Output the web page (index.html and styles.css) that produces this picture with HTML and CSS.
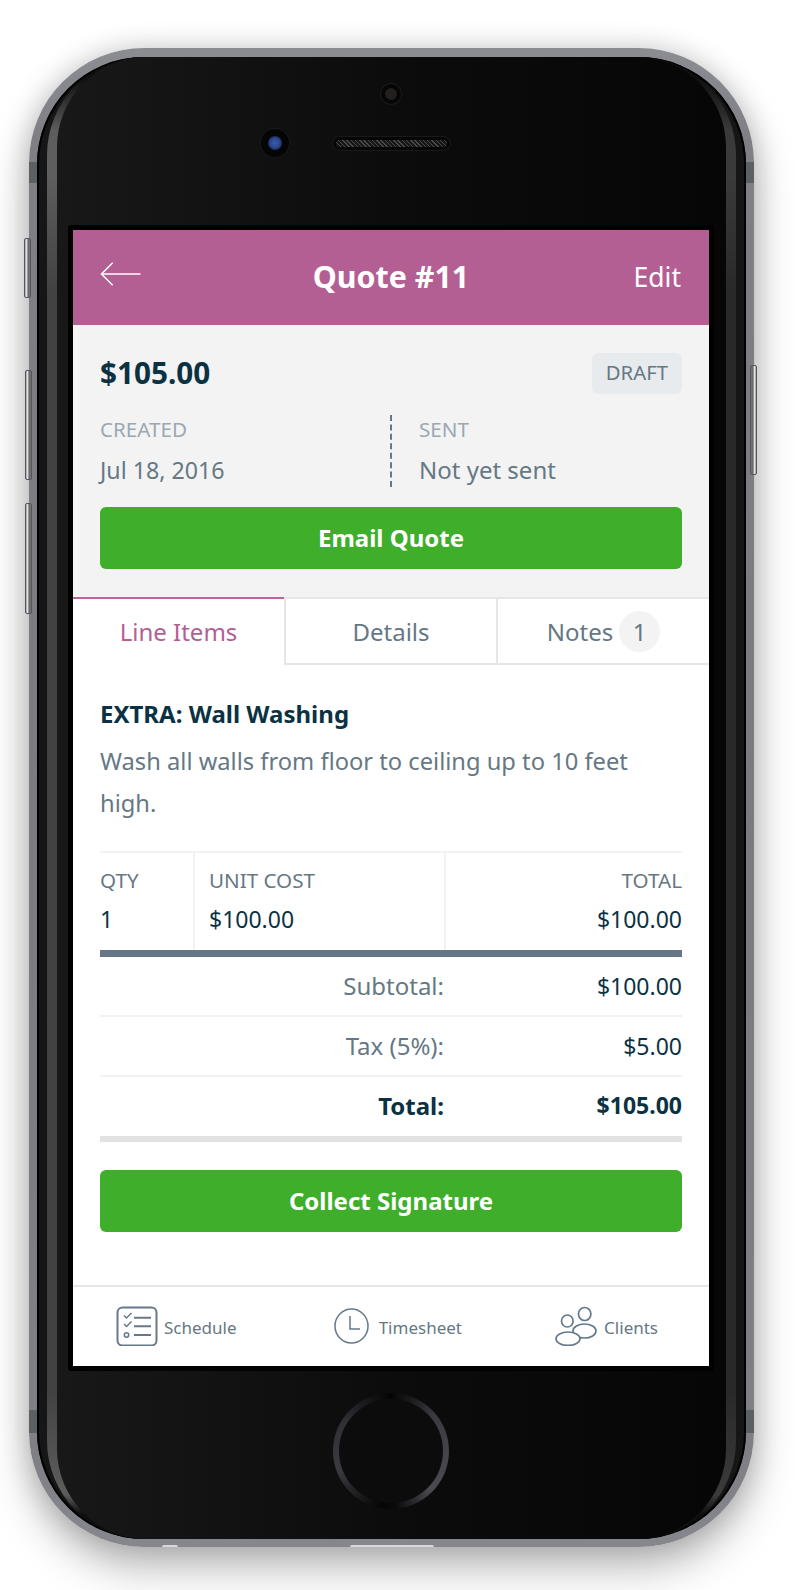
FILE: index.html
```html
<!DOCTYPE html>
<html lang="en">
<head>
<meta charset="utf-8">
<title>Quote #11</title>
<link rel="stylesheet" href="styles.css">
</head>
<body>
<div class="phone">
  <span class="hw-btn hw-mute"></span>
  <span class="hw-btn hw-up"></span>
  <span class="hw-btn hw-down"></span>
  <span class="hw-btn hw-power"></span>
  <span class="band band-tl"></span><span class="band band-tr"></span>
  <span class="band band-bl"></span><span class="band band-br"></span>
  <span class="notch notch-a"></span><span class="notch notch-b"></span>
  <div class="bezel">
    <div class="glare">
      <div class="face">
        <div class="front-sensor"></div>
        <div class="sensor-row">
          <div class="camera"><div class="lens"></div></div>
          <div class="speaker"><div class="mesh"></div></div>
        </div>
        <div class="frame">
          <div class="screen">
            <header class="topbar">
              <svg class="back" viewBox="0 0 42 26" width="41" height="26"><path d="M13 1.500 1.500 13 13 24.500M1.500 13H41.500" fill="none" stroke="#fff" stroke-width="1.500"/></svg>
              <h1 class="title">Quote #11</h1>
              <span class="edit">Edit</span>
            </header>
            <section class="summary">
              <div class="amount-row">
                <span class="amount">$105.00</span>
                <span class="badge">DRAFT</span>
              </div>
              <div class="meta">
                <div class="meta-col">
                  <div class="meta-label">CREATED</div>
                  <div class="meta-value meta-date">Jul 18, 2016</div>
                </div>
                <div class="meta-col meta-sent">
                  <div class="meta-label">SENT</div>
                  <div class="meta-value">Not yet sent</div>
                </div>
              </div>
              <div class="btn btn-email">Email Quote</div>
            </section>
            <nav class="tabs">
              <div class="tab tab-active">Line Items</div>
              <div class="tab">Details</div>
              <div class="tab">Notes<span class="count">1</span></div>
            </nav>
            <main class="content">
              <h2 class="item-title">EXTRA: Wall Washing</h2>
              <p class="item-desc">Wash all walls from floor to ceiling up to 10 feet high.</p>
              <div class="items">
                <div class="cell cell-qty"><div class="cell-label">QTY</div><div class="cell-value">1</div></div>
                <div class="cell cell-unit"><div class="cell-label">UNIT COST</div><div class="cell-value">$100.00</div></div>
                <div class="cell cell-total"><div class="cell-label">TOTAL</div><div class="cell-value">$100.00</div></div>
              </div>
              <div class="totals">
                <div class="total-row"><span class="total-label">Subtotal:</span><span class="total-value">$100.00</span></div>
                <div class="total-row"><span class="total-label">Tax (5%):</span><span class="total-value">$5.00</span></div>
                <div class="total-row total-grand"><span class="total-label">Total:</span><span class="total-value">$105.00</span></div>
              </div>
              <div class="btn btn-sign">Collect Signature</div>
            </main>
            <footer class="tabbar">
              <div class="bar-item bar-schedule">
                <svg width="42" height="40" viewBox="0 0 42 40" fill="none" stroke="#66798a" stroke-width="2"><rect x="1.500" y="1.500" width="39" height="38" rx="5"/><path d="M8 9.500l2.500 2.500 5-5M8 18l2.500 2.500 5-5" stroke-width="1.500"/><circle cx="10.500" cy="29" r="2.200" stroke-width="1.500"/><path d="M18 11.700h17M18 20.200h17M18 29h17"/></svg>
                <span class="bar-label">Schedule</span>
              </div>
              <div class="bar-item bar-timesheet">
                <svg width="35" height="36" viewBox="0 0 35 36" fill="none" stroke="#66798a" stroke-width="1.500"><ellipse cx="17.500" cy="18" rx="16.500" ry="17"/><path d="M16 8v13h10"/></svg>
                <span class="bar-label">Timesheet</span>
              </div>
              <div class="bar-item bar-clients">
                <svg width="44" height="40" viewBox="0 0 44 40" fill="#fff" stroke="#66798a" stroke-width="1.700"><ellipse cx="30.700" cy="8" rx="6.200" ry="6.500"/><ellipse cx="30.500" cy="25" rx="11.500" ry="7"/><ellipse cx="13.300" cy="15" rx="5.800" ry="6"/><ellipse cx="14" cy="32.700" rx="12" ry="6.700"/></svg>
                <span class="bar-label">Clients</span>
              </div>
            </footer>
          </div>
        </div>
        <div class="home"><div class="home-inner"></div></div>
      </div>
    </div>
  </div>
</div>
</body>
</html>
```

FILE: styles.css
```css
* { box-sizing: border-box; }
html, body { margin: 0; padding: 0; background: #fff; }
body {
  width: 795px;
  height: 1590px;
  overflow: hidden;
  padding: 48px 0 0 29px;
  font-family: "Noto Sans", sans-serif;
}

/* device */
.phone {
  position: relative;
  width: 725px;
  height: 1499px;
  padding: 9px 8px 8px;
  border-radius: 115px;
  background: linear-gradient(180deg, #8c8d92 0, #7f8085 6%, #7a7b80 50%, #7f8085 94%, #86878d 100%);
  box-shadow: 0 22px 42px rgba(0, 0, 0, .26), 0 0 28px rgba(0, 0, 0, .18);
}
.hw-btn {
  position: absolute;
  width: 7px;
  border-radius: 2px;
  border: 1px solid #55565a;
}
.hw-mute, .hw-up, .hw-down { background: linear-gradient(90deg, #8a8a8e 0, #f4f4f4 25%, #aaa 45%, #666669 65%, #77787c 100%); }
.hw-power { background: linear-gradient(270deg, #8a8a8e 0, #f4f4f4 25%, #aaa 45%, #666669 65%, #77787c 100%); }
.hw-mute { left: -5px; top: 190px; height: 60px; }
.hw-up { left: -4px; top: 322px; height: 110px; }
.hw-down { left: -4px; top: 455px; height: 111px; }
.hw-power { right: -3px; top: 317px; height: 110px; }
.band { position: absolute; width: 8px; height: 21px; background: #5c6062; }
.band-tl, .band-bl { left: 0; }
.band-tr, .band-br { right: 0; }
.band-tl, .band-tr { top: 114px; }
.band-bl, .band-br { top: 1362px; height: 23px; }
.notch { position: absolute; bottom: 0; height: 2px; background: #d9d9db; border-radius: 2px 2px 0 0; }
.notch-a { left: 133px; width: 16px; }
.notch-b { left: 321px; width: 84px; }

.bezel {
  height: 100%;
  padding: 0 10px;
  border-radius: 107px;
  background: #161616;
  box-shadow: inset 0 0 0 2px #000;
}
.glare {
  height: 100%;
  padding: 0 10px;
  border-radius: 98px;
  background:
    linear-gradient(180deg, #0f0f0f 0, #0f0f0f 1.500%, rgba(0, 0, 0, 0) 5%, rgba(0, 0, 0, 0) 8%, rgba(0, 0, 0, .3) 16%, rgba(0, 0, 0, .3) 90%, rgba(0, 0, 0, 0) 97%, #0f0f0f 98.300%),
    linear-gradient(90deg, #5e5e5e 0, #3a3a3a 100%);
}
.face {
  height: 100%;
  padding: 27px 0 0 11px;
  border-radius: 90px;
  background: linear-gradient(90deg, #181818 0, #0c0c0c 50%, #060606 100%);
  display: flex;
  flex-direction: column;
  overflow: hidden;
}
.front-sensor {
  align-self: flex-start;
  margin-left: 313px;
  width: 20px;
  height: 20px;
  padding: 3px;
  border-radius: 50%;
  background: #060606;
  box-shadow: 0 0 0 1px #1a1a1a;
}
.front-sensor::before {
  content: "";
  display: block;
  width: 14px;
  height: 14px;
  border-radius: 50%;
  background: #231f1f;
  box-shadow: inset 0 0 0 1px #000;
}
.sensor-row {
  display: flex;
  align-items: center;
  gap: 44px;
  height: 28px;
  margin: 25px 0 68px 193px;
}
.camera {
  width: 28px;
  height: 28px;
  padding: 7px;
  border-radius: 50%;
  background: #050505;
  box-shadow: 0 0 0 1px #191919;
}
.lens {
  width: 14px;
  height: 14px;
  border-radius: 50%;
  background: radial-gradient(circle at 50% 50%, #3a5aa8 0, #2b4a90 45%, #14234a 80%, #060810 100%);
}
.speaker {
  width: 117px;
  height: 13px;
  padding: 3px;
  border-radius: 7px;
  background: #060606;
  box-shadow: 0 0 0 1px #191919;
}
.mesh {
  height: 100%;
  border-radius: 4px;
  background: repeating-linear-gradient(45deg, #4a4a4a 0, #4a4a4a 1px, #171717 1px, #171717 3px);
}
.frame {
  flex: none;
  width: 646px;
  height: 1146px;
  padding: 5px;
  background: #000;
  border-radius: 3px;
}
.screen {
  width: 636px;
  height: 1136px;
  display: flex;
  flex-direction: column;
  background: #fff;
}
.home {
  align-self: flex-start;
  flex: none;
  margin: 22px 0 0 265px;
  width: 116px;
  height: 116px;
  padding: 6px;
  border-radius: 50%;
  background: conic-gradient(#050505 0deg, #3a3a40 50deg, #45454c 100deg, #4a4a50 135deg, #0a0a0c 175deg, #050505 190deg, #3a3a40 250deg, #303036 300deg, #050505 360deg);
}
.home-inner {
  height: 100%;
  border-radius: 50%;
  background: #0c0c0c;
}

/* header */
.topbar {
  flex: none;
  height: 95px;
  padding: 0 27px;
  background: #b35f93;
  color: #fff;
  display: grid;
  grid-template-columns: 1fr auto 1fr;
  align-items: center;
}
.back { margin-top: -7px; display: block; }
.title { margin: -1px 0 0; font-size: 30.400px; font-weight: 700; line-height: 40px; }
.edit { justify-self: end; font-size: 26.500px; line-height: 40px; margin: -1px 1px 0 0; }

/* summary */
.summary {
  flex: none;
  height: 272px;
  padding: 28px 27px 0;
  background: #f3f3f3;
}
.amount-row {
  display: flex;
  justify-content: space-between;
  align-items: center;
  height: 41px;
}
.amount { font-size: 29.700px; font-weight: 700; color: #0b3243; line-height: 39px; padding-bottom: 2px; }
.badge {
  height: 41px;
  padding: 0 14px;
  border-radius: 6px;
  background: #e8ebee;
  color: #657884;
  font-size: 20.300px;
  line-height: 39px;
}
.meta {
  display: grid;
  grid-template-columns: 290px 1fr;
  height: 72px;
  margin-top: 21px;
}
.meta-sent {
  padding-left: 27px;
  border-left: 2px dashed #657884;
}
.meta-label { font-size: 20.600px; line-height: 28px; color: #9aa8b2; }
.meta-value { font-size: 24px; line-height: 30px; margin-top: 12px; color: #657884; }
.meta-date { font-size: 23.200px; }
.btn {
  height: 62px;
  border-radius: 6px;
  background: #3eae2b;
  color: #fff;
  font-size: 24px;
  font-weight: 700;
  line-height: 62px;
  text-align: center;
}
.btn-email { margin-top: 20px; }

/* tabs */
.tabs {
  flex: none;
  height: 68px;
  display: grid;
  grid-template-columns: 211px 212px 213px;
  background: #fff;
}
.tab {
  display: flex;
  align-items: center;
  justify-content: center;
  gap: 6px;
  font-size: 24px;
  color: #657884;
  border-top: 2px solid #e6e6e6;
  border-bottom: 2px solid #e6e6e6;
  border-left: 2px solid #e6e6e6;
}
.tab-active {
  color: #b35f93;
  border-top-color: #c0639a;
  border-bottom: 0;
  border-left: 0;
  padding-bottom: 2px;
}
.count {
  width: 41px;
  height: 41px;
  border-radius: 50%;
  background: #f3f3f3;
  text-align: center;
  line-height: 41px;
}

/* content */
.content {
  flex: 1;
  padding: 34px 27px 0;
  background: #fff;
}
.item-title { margin: 0; font-size: 24px; font-weight: 700; line-height: 30px; color: #0b3243; }
.item-desc { margin: 11px 0 27px; font-size: 23.700px; line-height: 42px; color: #657884; }
.items {
  display: grid;
  grid-template-columns: 93px 251px 1fr;
  height: 106px;
  border-top: 2px solid #f2f2f2;
  border-bottom: 7px solid #657786;
}
.cell { padding-top: 12px; }
.cell-unit { padding-left: 14px; border-left: 2px solid #f2f2f2; }
.cell-total { text-align: right; border-left: 2px solid #f2f2f2; }
.cell-label { font-size: 20.600px; line-height: 30px; color: #657884; }
.cell-value { font-size: 23px; line-height: 30px; margin-top: 9px; color: #0b3243; }
.total-row {
  display: grid;
  grid-template-columns: 1fr 238px;
  height: 60px;
  align-items: center;
  border-bottom: 2px solid #f2f2f2;
  font-size: 23px;
  text-align: right;
}
.total-label { color: #657884; font-size: 24px; padding-bottom: 2px; }
.total-value { color: #0b3243; }
.total-grand {
  height: 65px;
  padding-bottom: 3px;
  font-weight: 700;
  border-bottom: 6px solid #e2e2e2;
}
.total-grand .total-label { color: #0b3243; padding-bottom: 0; }
.btn-sign { margin-top: 28px; }

/* bottom bar */
.tabbar {
  flex: none;
  height: 81px;
  padding: 2px 51px 0 43px;
  border-top: 2px solid #e6e6e6;
  display: flex;
  justify-content: space-between;
  align-items: center;
  background: #fff;
}
.bar-item { display: flex; align-items: center; }
.bar-item svg { margin-top: -4px; }
.bar-schedule { gap: 6px; }
.bar-timesheet { gap: 10px; margin-left: 6px; }
.bar-clients { gap: 6px; margin-left: 1px; }
.bar-label { font-size: 17px; color: #657884; }
```
